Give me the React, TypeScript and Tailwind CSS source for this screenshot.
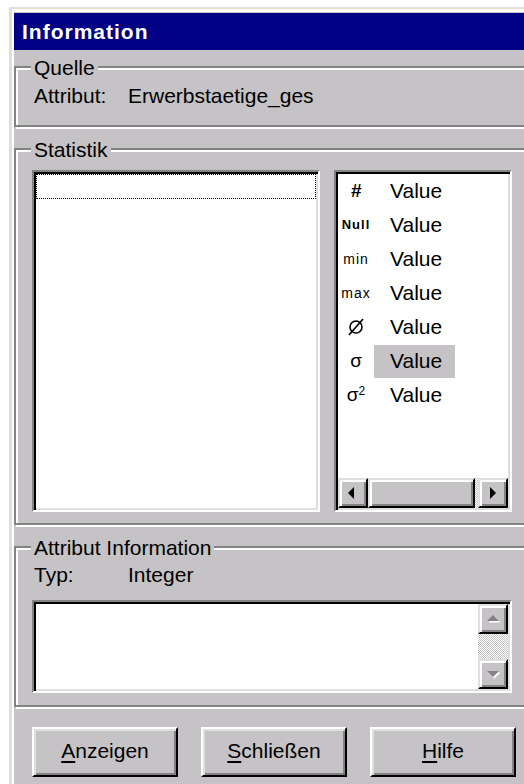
import React from "react";

// Etched frame used by the dialog's group boxes
function Group({
  title,
  className,
  children,
}: {
  title: string;
  className?: string;
  children?: React.ReactNode;
}) {
  return (
    <div
      className={`relative border-2 border-[#848284] shadow-[inset_2px_2px_0_#fff,2px_2px_0_#fff] ${className ?? ""}`}
    >
      <span className="absolute -top-[12px] left-[15px] bg-[#c6c3c6] px-[3px] leading-[24px]">
        {title}
      </span>
      {children}
    </div>
  );
}

const sunken =
  "border-2 border-t-[#848284] border-l-[#848284] border-r-white border-b-white shadow-[inset_2px_2px_0_#000,inset_-2px_-2px_0_#dfdfdf] p-[2px] bg-white";

const raised =
  "border-2 border-t-[#dfdfdf] border-l-[#dfdfdf] border-r-black border-b-black shadow-[inset_2px_2px_0_#fff,inset_-2px_-2px_0_#848284] bg-[#c6c3c6]";

const pushButton =
  "border-2 border-t-white border-l-white border-r-black border-b-black shadow-[inset_2px_2px_0_#dfdfdf,inset_-2px_-2px_0_#848284] bg-[#c6c3c6]";

const dither =
  "bg-[repeating-conic-gradient(#fff_0_25%,#c6c3c6_0_50%)] bg-[length:2px_2px]";

function Arrow({ dir, disabled }: { dir: "left" | "right" | "up" | "down"; disabled?: boolean }) {
  const pts: Record<string, string> = {
    left: "9,3 9,15 3,9",
    right: "5,3 5,15 11,9",
    up: "2,11 14,11 8,5",
    down: "2,6 14,6 8,12",
  };
  return (
    <svg width="16" height="18" viewBox="0 0 16 18">
      {disabled && <polygon points={pts[dir]} fill="#fff" transform="translate(1.5,1.5)" />}
      <polygon points={pts[dir]} fill={disabled ? "#848284" : "#000"} />
    </svg>
  );
}

function Diameter() {
  return (
    <svg width="22" height="22" viewBox="0 0 22 22">
      <circle cx="11" cy="11" r="6" fill="none" stroke="#000" strokeWidth="1.6" />
      <line x1="4" y1="19" x2="18" y2="3" stroke="#000" strokeWidth="1.6" />
    </svg>
  );
}

const stats: { icon: React.ReactNode; selected?: boolean }[] = [
  { icon: <span className="text-[19px] font-bold italic">#</span> },
  { icon: <span className="text-[13px] font-bold tracking-[1px]">Null</span> },
  { icon: <span className="text-[14px] tracking-[1px]">min</span> },
  { icon: <span className="text-[14px] tracking-[1px]">max</span> },
  { icon: <Diameter /> },
  { icon: <span className="text-[19px]">σ</span>, selected: true },
  {
    icon: (
      <span className="text-[19px]">
        σ<sup className="text-[12px] -top-[6px]">2</sup>
      </span>
    ),
  },
];

function Btn({ u, rest }: { u: string; rest: string }) {
  return (
    <div className={`${pushButton} w-[146px] h-[50px] flex items-center justify-center pb-[3px]`}>
      <span>
        <span className="underline underline-offset-[3px]">{u}</span>
        {rest}
      </span>
    </div>
  );
}

export default function App() {
  return (
    <div className="w-[524px] h-[784px] overflow-hidden bg-white font-['Liberation_Sans',Arial,sans-serif] text-[21px] text-black">
      <div className="ml-[9px] mt-[7px] w-[600px] border-l-[3px] border-t-2 border-[#dfdfdf]">
        <div className="h-[800px] border-l-2 border-t-[3px] border-white bg-[#c6c3c6] pt-[1px]">
          {/* title bar */}
          <div className="h-[37px] bg-[#000084] pl-[8px] flex items-center text-white font-bold tracking-[1px]">
            Information
          </div>

          {/* Quelle */}
          <Group title="Quelle" className="mt-[16px] h-[61px] pt-[16px]">
            <div className="flex pl-[18px] leading-[24px]">
              <span className="w-[94px]">Attribut:</span>
              <span>Erwerbstaetige_ges</span>
            </div>
          </Group>

          {/* Statistik */}
          <Group title="Statistik" className="mt-[21px] h-[377px] pt-[20px] pl-[16px]">
            <div className="flex gap-[14px]">
              <div className={`${sunken} w-[288px] h-[342px]`}>
                <div className="h-[25px] border border-dotted border-black" />
              </div>
              <div className={`${sunken} w-[178px] h-[342px] flex flex-col`}>
                <div className="flex-1">
                  {stats.map((s, i) => (
                    <div key={i} className="h-[34px] flex items-center">
                      <div className="w-[36px] flex justify-center items-center">{s.icon}</div>
                      <div
                        className={`w-[81px] h-[33px] flex items-center pl-[16px] ${s.selected ? "bg-[#c6c3c6]" : ""}`}
                      >
                        Value
                      </div>
                    </div>
                  ))}
                </div>
                <div className="h-[30px] flex">
                  <div className={`${raised} w-[30px] flex items-center justify-center`}>
                    <Arrow dir="left" />
                  </div>
                  <div className={`${raised} w-[107px]`} />
                  <div className={`${dither} flex-1`} />
                  <div className={`${raised} w-[30px] flex items-center justify-center`}>
                    <Arrow dir="right" />
                  </div>
                </div>
              </div>
            </div>
          </Group>

          {/* Attribut Information */}
          <Group title="Attribut Information" className="mt-[21px] h-[161px] pt-[15px] pl-[16px]">
            <div className="flex pl-[2px] leading-[24px]">
              <span className="w-[94px]">Typ:</span>
              <span>Integer</span>
            </div>
            <div className={`${sunken} mt-[13px] w-[480px] h-[93px] flex justify-end`}>
              <div className="w-[30px] flex flex-col">
                <div className={`${raised} h-[30px] flex items-center justify-center`}>
                  <Arrow dir="up" disabled />
                </div>
                <div className={`${dither} flex-1`} />
                <div className={`${raised} h-[30px] flex items-center justify-center`}>
                  <Arrow dir="down" disabled />
                </div>
              </div>
            </div>
          </Group>

          {/* dialog buttons */}
          <div className="mt-[20px] pl-[18px] flex gap-[23px]">
            <Btn u="A" rest="nzeigen" />
            <Btn u="S" rest="chließen" />
            <Btn u="H" rest="ilfe" />
          </div>
        </div>
      </div>
    </div>
  );
}
